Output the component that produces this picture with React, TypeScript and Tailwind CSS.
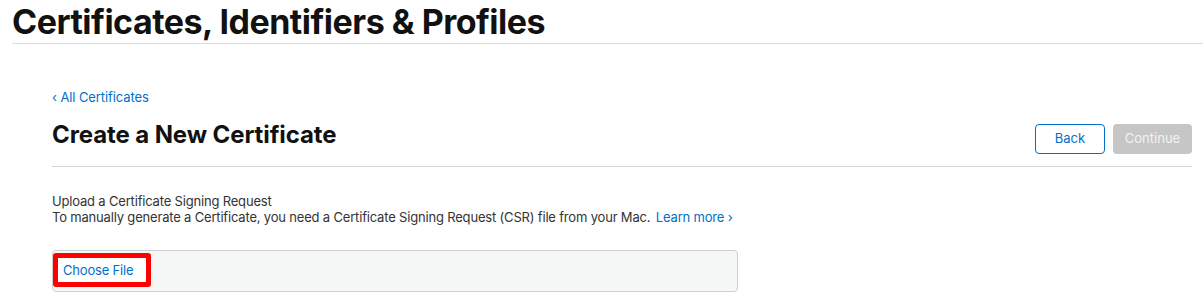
export default function App() {
  return (
    <main className="min-h-screen bg-white text-[#111] font-['Inter',sans-serif]">
      <header className="pl-3 pt-[2px]">
        <h1 className="text-[34px] font-bold leading-[40px] tracking-[-0.5px]">
          Certificates, Identifiers &amp; Profiles
        </h1>
        <div className="mt-[1px] h-px bg-[#dcdcdc]" />
      </header>

      <div className="ml-[52px] w-[1140px] pt-[45px]">
        <a href="#" className="block text-[13px] leading-4 tracking-[-0.1px] text-[#0070c9]">
          ‹ All Certificates
        </a>

        <div className="mt-[13px] flex h-[49px] items-start justify-between border-b border-[#d6d6d6]">
          <h2 className="mt-[3px] text-[24px] font-bold leading-7 tracking-[-0.1px]">
            Create a New Certificate
          </h2>
          <div className="mt-[6px] flex gap-2">
            <button className="h-[30px] w-[70px] rounded-[4px] border border-[#0070c9] text-[13px] text-[#0070c9]">
              Back
            </button>
            <button className="h-[30px] w-[79px] rounded-[4px] bg-[#c6c6c6] text-[13px] text-[#f2f2f2]">
              Continue
            </button>
          </div>
        </div>

        <section className="pt-[26px] text-[13px] leading-4 tracking-[-0.18px] text-[#333]">
          <p>Upload a Certificate Signing Request</p>
          <p>
            To manually generate a Certificate, you need a Certificate Signing Request (CSR) file from your Mac.{" "}
            <a href="#" className="ml-[2px] text-[#0070c9]">Learn more ›</a>
          </p>

          <div className="mt-[25px] h-[42px] w-[686px] rounded-[4px] border border-[#cfcfcf] bg-[#f6f7f7] pt-[2px]">
            <div className="inline-flex h-[34px] w-[98px] items-center rounded-[3px] border-[5px] border-[#ff0000] bg-white pl-[5px]">
              <span className="text-[13px] text-[#0070c9]">Choose File</span>
            </div>
          </div>
        </section>
      </div>
    </main>
  );
}
